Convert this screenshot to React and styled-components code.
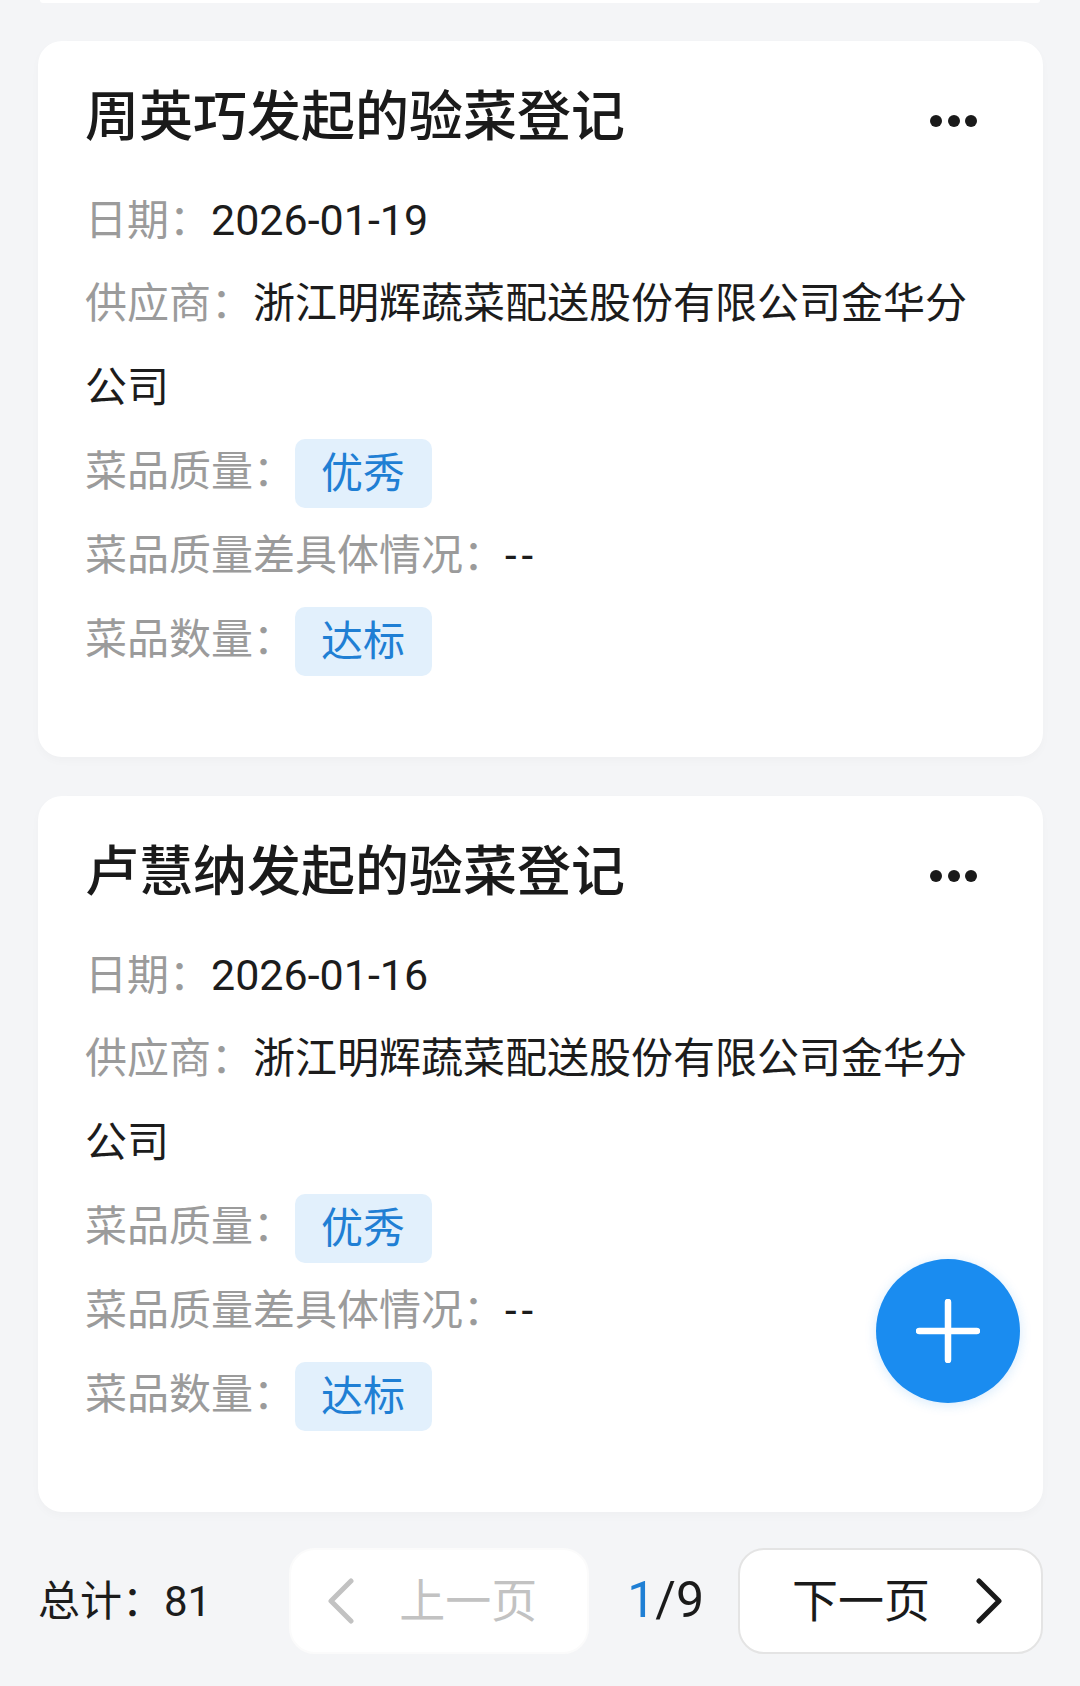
import React from "react";
import styled, { createGlobalStyle } from "styled-components";

const GlobalStyle = createGlobalStyle`
  html, body {
    margin: 0;
    padding: 0;
    background: #f4f5f7;
  }
  body {
    font-family: "Roboto", "Noto Sans CJK SC", sans-serif;
    color: #1c1c1c;
  }
`;

const Page = styled.div`
  min-height: 1686px;
  background: #f4f5f7;
`;

// bottom edge of the card above, scrolled out of view
const PrevTail = styled.div`
  height: 3px;
  margin: 0 40px;
  background: #fff;
  border-radius: 0 0 6px 6px;
`;

const List = styled.div`
  display: flex;
  flex-direction: column;
  gap: 39px;
  padding: 38px 37px 0 38px;
`;

const Card = styled.section`
  background: #fff;
  border-radius: 24px;
  padding: 39px 66px 75px 47px;
  box-shadow: 0 4px 10px rgba(0, 0, 0, 0.025);
`;

const TitleRow = styled.div`
  display: flex;
  align-items: center;
  justify-content: space-between;
  height: 76px;
  margin-bottom: 22px;
`;

const Title = styled.h2`
  margin: 0;
  font-size: 54px;
  font-weight: 500;
  color: #1a1a1a;
  line-height: 76px;
`;

const MoreBtn = styled.div`
  display: flex;
  gap: 5.5px;
  padding-top: 6px;
`;

const Dot = styled.span`
  width: 12px;
  height: 12px;
  border-radius: 50%;
  background: #1a1a1a;
`;

const Row = styled.div`
  font-size: 42px;
  line-height: 84px;
  height: ${(p) => (p.$lines ? p.$lines * 84 : 84)}px;
`;

const Label = styled.span`
  color: #9b9b9b;
`;

const Value = styled.span`
  color: #1c1c1c;
  font-size: ${(p) => (p.$num ? "43px" : "42px")};
  letter-spacing: ${(p) => (p.$dash ? "5px" : "normal")};
`;

const Tag = styled.span`
  display: inline-flex;
  align-items: center;
  height: 69px;
  padding: 0 27px 0 26px;
  border-radius: 10px;
  background: #e2f0fc;
  color: #1f7fd4;
  vertical-align: middle;
  line-height: 1;
  position: relative;
  top: -1px;
`;

const Footer = styled.footer`
  display: flex;
  align-items: center;
  justify-content: space-between;
  padding: 36px 37px 0 38px;
`;

const Total = styled.div`
  font-size: 42px;
  color: #1c1c1c;
  padding-bottom: 8px;
`;

const Pager = styled.div`
  display: flex;
  align-items: center;
`;

const PageBtn = styled.button`
  display: flex;
  align-items: center;
  gap: ${(p) => (p.$disabled ? "45px" : "46px")};
  height: 106px;
  padding: ${(p) => (p.$disabled ? "0 50px 8px 36px" : "0 38px 8px 52px")};
  border: 2px solid ${(p) => (p.$disabled ? "#fbfbfb" : "#e4e4e4")};
  border-radius: 26px;
  background: #fff;
  font-family: inherit;
  font-size: 46px;
  color: ${(p) => (p.$disabled ? "#c2c2c2" : "#1a1a1a")};
  cursor: ${(p) => (p.$disabled ? "default" : "pointer")};

  svg {
    margin-top: 8px;
  }
`;

const PageNum = styled.div`
  font-size: 50px;
  color: #1a1a1a;
  margin: 0 34px 0 38px;
  padding-bottom: 2px;
  span {
    color: #1f7fd4;
  }
`;

const Fab = styled.button`
  position: fixed;
  right: 60px;
  bottom: 283px;
  width: 144px;
  height: 144px;
  border: none;
  border-radius: 50%;
  background: #1a8cf0;
  display: flex;
  align-items: center;
  justify-content: center;
  box-shadow: 0 2px 12px rgba(26, 140, 240, 0.18);
  cursor: pointer;
`;

const Chevron = ({ dir, color }) => (
  <svg width="27" height="46" viewBox="0 0 27 46">
    <polyline
      points={dir === "left" ? "24,3 4,23 24,43" : "3,3 23,23 3,43"}
      fill="none"
      stroke={color}
      strokeWidth="5"
      strokeLinecap="round"
      strokeLinejoin="round"
    />
  </svg>
);

const records = [
  {
    id: 1,
    name: "周英巧",
    date: "2026-01-19",
    supplier: "浙江明辉蔬菜配送股份有限公司金华分公司",
    quality: "优秀",
    detail: "--",
    amount: "达标",
  },
  {
    id: 2,
    name: "卢慧纳",
    date: "2026-01-16",
    supplier: "浙江明辉蔬菜配送股份有限公司金华分公司",
    quality: "优秀",
    detail: "--",
    amount: "达标",
  },
];

const RecordCard = ({ rec }) => (
  <Card>
    <TitleRow>
      <Title>{rec.name}发起的验菜登记</Title>
      <MoreBtn>
        <Dot />
        <Dot />
        <Dot />
      </MoreBtn>
    </TitleRow>
    <Row>
      <Label>日期：</Label>
      <Value $num>{rec.date}</Value>
    </Row>
    <Row $lines={2}>
      <Label>供应商：</Label>
      <Value>{rec.supplier}</Value>
    </Row>
    <Row>
      <Label>菜品质量：</Label>
      <Tag>{rec.quality}</Tag>
    </Row>
    <Row>
      <Label>菜品质量差具体情况：</Label>
      <Value $dash>{rec.detail}</Value>
    </Row>
    <Row>
      <Label>菜品数量：</Label>
      <Tag>{rec.amount}</Tag>
    </Row>
  </Card>
);

const App = () => {
  return (
    <Page>
      <GlobalStyle />
      <PrevTail />
      <List>
        {records.map((r) => (
          <RecordCard key={r.id} rec={r} />
        ))}
      </List>

      <Footer>
        <Total>总计：81</Total>
        <Pager>
          <PageBtn $disabled>
            <Chevron dir="left" color="#c2c2c2" />
            上一页
          </PageBtn>
          <PageNum>
            <span>1</span>/9
          </PageNum>
          <PageBtn>
            下一页
            <Chevron dir="right" color="#1a1a1a" />
          </PageBtn>
        </Pager>
      </Footer>

      <Fab aria-label="新增">
        <svg width="64" height="64" viewBox="0 0 64 64">
          <path
            d="M32 3 V61 M3 32 H61"
            stroke="#fff"
            strokeWidth="6.5"
            strokeLinecap="round"
          />
        </svg>
      </Fab>
    </Page>
  );
};

export default App;
